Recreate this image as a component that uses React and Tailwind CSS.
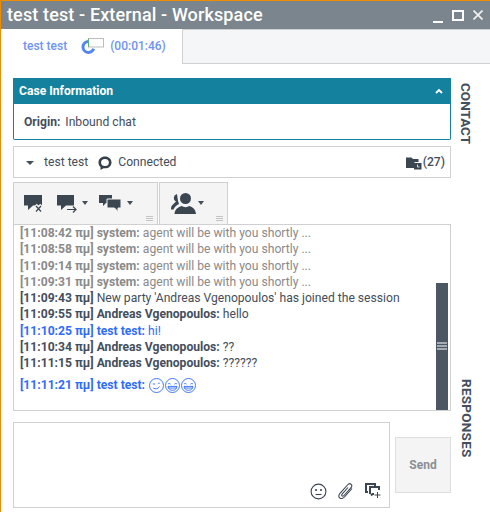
const messages = [
  { time: '[11:08:42 πμ]', who: 'system:', text: 'agent will be with you shortly ...', tone: 'gray' },
  { time: '[11:08:58 πμ]', who: 'system:', text: 'agent will be with you shortly ...', tone: 'gray' },
  { time: '[11:09:14 πμ]', who: 'system:', text: 'agent will be with you shortly ...', tone: 'gray' },
  { time: '[11:09:31 πμ]', who: 'system:', text: 'agent will be with you shortly ...', tone: 'gray' },
  { time: '[11:09:43 πμ]', who: '', text: "New party 'Andreas Vgenopoulos' has joined the session", tone: 'dark' },
  { time: '[11:09:55 πμ]', who: 'Andreas Vgenopoulos:', text: 'hello', tone: 'dark' },
  { time: '[11:10:25 πμ]', who: 'test test:', text: 'hi!', tone: 'blue' },
  { time: '[11:10:34 πμ]', who: 'Andreas Vgenopoulos:', text: '??', tone: 'dark' },
  { time: '[11:11:15 πμ]', who: 'Andreas Vgenopoulos:', text: '??????', tone: 'dark' },
];

const tones = {
  gray: 'text-[#8a8a8a]',
  dark: 'text-[#444e5c]',
  blue: 'text-[#2f6bff]',
};

function Caret({ className }) {
  return <span className={`h-0 w-0 border-x-[3.5px] border-t-[4px] border-x-transparent border-t-[#444f5a] ${className}`} />;
}

function Grip() {
  return (
    <svg width="7" height="7" viewBox="0 0 7 7" className="absolute bottom-[2px] right-[4px]">
      <path d="M0 1.5h7M0 3.5h7M0 5.5h7" stroke="#c4c4c4" strokeWidth="1" />
    </svg>
  );
}

function Smiley({ wink }) {
  return (
    <svg width="15" height="15" viewBox="0 0 15 15" fill="none" stroke="#2f6bff" strokeWidth="0.9">
      <circle cx="7.5" cy="7.5" r="7" />
      {wink ? (
        <>
          <path d="M3.8 6h2.4M8.8 5.4c.6-.4 1.3-.4 1.9 0" />
          <path d="M4.2 10c2.3 1.4 4.6 1 6.4-1.4" />
        </>
      ) : (
        <>
          <path d="M3 6.2c.7-1 1.9-1 2.6 0M9.4 6.2c.7-1 1.9-1 2.6 0" />
          <path d="M3 8.4h9c-.3 2.6-2 3.9-4.5 3.9S3.3 11 3 8.400zM3.6 10h7.800" />
        </>
      )}
    </svg>
  );
}

export default function App() {
  return (
    <div className="flex h-[512px] w-[490px] flex-col overflow-hidden border-l border-t border-[#f08c00] bg-white font-['Roboto',sans-serif] text-[12.13px] text-[#444e5c]">
      <div className="flex h-[28px] shrink-0 items-center justify-between bg-[#7a858e] pl-[6px] pr-[7px] text-white">
        <span className="text-[18px] font-medium leading-none tracking-[0.13px]">test test - External - Workspace</span>
        <div className="flex items-center gap-[9px]">
          <span className="mt-[13px] h-[2px] w-[10px] bg-white" />
          <span className="h-[11px] w-[12px] border-2 border-white" />
          <svg width="10" height="10" viewBox="0 0 10 10" stroke="#f2f2f2" strokeWidth="1.7">
            <path d="M0.5 0.5l9 9M9.5 0.5l-9 9" />
          </svg>
        </div>
      </div>

      <div className="flex h-[35px] shrink-0">
        <div className="flex w-[182px] items-center border-r border-[#cfd1d3] pb-[2px] pl-[22px] text-[12px] font-medium text-[#6d93f5]">
          <span>test test</span>
          <svg width="24" height="16" viewBox="0 0 24 16" className="ml-[14px]">
            <path d="M7.5 3.5a5.500 5.500 0 1 0 5.200 7.300" fill="none" stroke="#5585f0" strokeWidth="3" />
            <rect x="7.500" y="0.500" width="15" height="8.500" fill="#fff" stroke="#bdbdbd" />
            <path d="M7.500 0.500v8.500" stroke="#58b368" />
          </svg>
          <span className="ml-[5px]">(00:01:46)</span>
        </div>
        <div className="flex-1 border-b border-t border-[#cfd1d3] bg-[#f5f6f8]" />
      </div>

      <div className="flex min-h-0 flex-1">
        <div className="ml-[12px] flex w-[438px] flex-col pt-[14px]">
          <div className="h-[62px] rounded-b-[2px] border-b border-l border-r border-[#14829e]">
            <div className="-mx-px flex h-[26px] items-center justify-between bg-[#14829e] pl-[6px] pr-[8px] font-bold text-white">
              <span>Case Information</span>
              <svg width="8" height="6" viewBox="0 0 8 6" fill="none" stroke="#fff" strokeWidth="1.8">
                <path d="M1 5l3-3 3 3" />
              </svg>
            </div>
            <div className="flex h-[35px] items-center pl-[10px] pt-[1px]">
              <span className="font-bold">Origin:</span>
              <span className="ml-[5px]">Inbound chat</span>
            </div>
          </div>

          <div className="mt-[6px] flex h-[32px] items-center border border-[#d0d0d0] pl-[12px] pr-[5px] pt-[1px]">
            <span className="h-0 w-0 border-x-[4px] border-t-[4px] border-x-transparent border-t-[#444f5a]" />
            <span className="ml-[10px]">test test</span>
            <svg width="14" height="14" viewBox="0 0 14 14" className="ml-[10px]">
              <path d="M7 .5c3.700 0 6.500 2.600 6.500 5.900S10.700 12.300 7 12.300c-.5 0-1 0-1.500-.1L2.500 14v-3.100C1.100 9.800.5 8.200.5 6.400.5 3.100 3.300.5 7 .5z" fill="#36404a" />
              <ellipse cx="7" cy="6.400" rx="3.900" ry="3.500" fill="#fff" />
            </svg>
            <span className="ml-[6px]">Connected</span>
            <svg width="16" height="14" viewBox="0 0 16 14" className="ml-auto">
              <path d="M0 1.500h5.500l1.500 1.500h5.500v3h-4v6H0z" fill="#3c4650" />
              <rect x="8" y="7" width="7.500" height="6.500" fill="#3c4650" />
              <path d="M11.500 8.500v2.500h2" fill="none" stroke="#fff" strokeWidth="0.8" />
            </svg>
            <span className="ml-[1px] font-medium">(27)</span>
          </div>

          <div className="mt-[4px] flex h-[42px] shrink-0">
            <div className="relative flex w-[145px] items-start border border-b-0 border-[#d0d0d0] bg-[#f4f4f4] pl-[9px] pt-[11px]">
              <svg width="22" height="20" viewBox="0 0 22 20">
                <path d="M1 1h18v10.500H10L5 16v-4.500H1z" fill="#3c4650" />
                <path d="M12.500 11l6 6.500M18.500 11l-6 6.500" stroke="#f4f4f4" strokeWidth="3.500" />
                <path d="M13 12l5 5.500M18 12l-5 5.500" stroke="#3c4650" strokeWidth="1.200" />
              </svg>
              <svg width="22" height="20" viewBox="0 0 22 20" className="ml-[11px]">
                <path d="M1 1h17v10.500H10L5 16v-4.500H1z" fill="#3c4650" />
                <path d="M11 15.500h9M17 12.500l3 3-3 3" fill="none" stroke="#f4f4f4" strokeWidth="3" />
                <path d="M11 15.500h9M17 12.500l3 3-3 3" fill="none" stroke="#3c4650" strokeWidth="1.200" />
              </svg>
              <Caret className="ml-[4px] mt-[7px]" />
              <svg width="24" height="19" viewBox="0 0 24 19" className="ml-[11px]">
                <path d="M0 1h13v8H7l-3 3V9H0z" fill="#3c4650" />
                <path d="M8 5h14v9h-3v3.500L15.500 14H8z" fill="#3c4650" stroke="#f4f4f4" strokeWidth="1" />
              </svg>
              <Caret className="ml-[4px] mt-[7px]" />
              <Grip />
            </div>
            <div className="relative ml-[1px] flex w-[69px] items-start border border-b-0 border-[#d0d0d0] bg-[#f4f4f4] pl-[11px] pt-[9px]">
              <svg width="25" height="23" viewBox="0 0 25 23">
                <circle cx="14.500" cy="6.500" r="5.500" fill="#3c4650" />
                <path d="M3.500 22c.3-5 4-7 7-8 2.500 1.500 5.500 1.500 8 0 3 1 6 3 6.500 8z" fill="#3c4650" />
                <path d="M6 2a4 4 0 0 0-1 7.500L1 13.500c-.8 1-1 2.500-1 4h2.500c1-2.500 3-4.500 5.500-5.500L7 9z" fill="#3c4650" />
              </svg>
              <Caret className="ml-[2px] mt-[9px]" />
              <Grip />
            </div>
          </div>

          <div className="flex h-[187px] shrink-0 overflow-hidden border border-[#d0d0d0]">
            <div className="flex-1 pl-[6px] leading-[16.25px]">
              {messages.map((m) => (
                <div key={m.time} className={tones[m.tone]}>
                  <b>{m.time}</b> {m.who && <b>{m.who}</b>} {m.text}
                </div>
              ))}
              <div className="mt-[5px] flex h-[18px] items-center gap-[1px] text-[#2f6bff]">
                <b className="mr-[3px]">[11:11:21 πμ] test test:</b>
                <Smiley wink />
                <Smiley />
                <Smiley />
              </div>
            </div>
            <div className="mr-[2px] flex w-[12px] flex-col justify-end">
              <div className="flex h-[127px] items-center justify-center bg-[#4b5864]">
                <svg width="10" height="8" viewBox="0 0 10 8" className="mt-[-2px]">
                  <path d="M0 1h10M0 4h10M0 7h10" stroke="#fff" strokeWidth="1" />
                </svg>
              </div>
            </div>
          </div>

          <div className="mt-[11px] flex">
            <div className="flex h-[86px] w-[377px] items-end justify-end gap-[11px] border border-[#d0d0d0] pb-[7px] pr-[7px]">
              <svg width="17" height="17" viewBox="0 0 17 17" fill="none" stroke="#3c4650" strokeWidth="1.100">
                <circle cx="8.500" cy="8.500" r="7.400" />
                <circle cx="6" cy="7" r="1.100" fill="#3c4650" stroke="none" />
                <circle cx="11" cy="7" r="1.100" fill="#3c4650" stroke="none" />
                <path d="M5.500 11.500h6" />
              </svg>
              <svg width="16" height="18" viewBox="0 0 16 18" fill="none" stroke="#3c4650" strokeWidth="1.100">
                <path d="M14 6.500L6.500 15c-1.500 1.700-3.700 1.900-4.800.8-1.200-1.100-1-3 .5-4.700L9.500 3c1.200-1.300 2.700-1.600 3.700-.7s.8 2.300-.4 3.600L6 13.500c-.7.800-1.500.9-2 .4s-.4-1.300.3-2.100L10 5.500" />
              </svg>
              <svg width="17" height="15" viewBox="0 0 17 15" className="mb-[2px]" fill="none">
                <path d="M3 9H1V1h9v2" stroke="#3c4650" strokeWidth="2" />
                <path d="M5 11V4h9v3M9 11H7.500L6 12.500" stroke="#3c4650" strokeWidth="2" />
                <path d="M12.500 9v6M9.500 12h6" stroke="#3c4650" strokeWidth="1" />
              </svg>
            </div>
            <button className="ml-[5px] mt-[15px] h-[56px] w-[56px] border border-[#dedede] bg-[#f4f4f4] text-[12px] font-bold text-[#8a8f96]">
              Send
            </button>
          </div>
        </div>

        <div className="flex flex-1 flex-col items-start pl-[7px] pt-[19px] text-[13.5px] font-bold leading-[15px] text-[#444e5c]">
          <span className="[writing-mode:vertical-rl]">CONTACT</span>
          <span className="ml-[1px] mt-[235px] tracking-[0.25px] [writing-mode:vertical-rl]">RESPONSES</span>
        </div>
      </div>
    </div>
  );
}
